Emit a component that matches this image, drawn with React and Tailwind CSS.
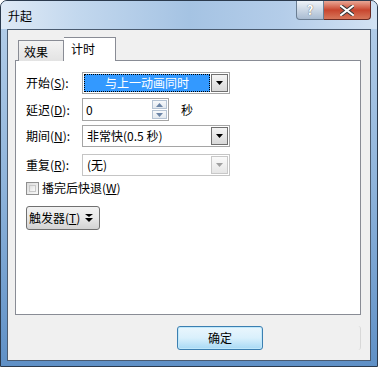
const font = { fontFamily: '"Microsoft YaHei", "Noto Sans CJK SC", sans-serif' };

function Arrow({ disabled }) {
  return (
    <svg width="7" height="4" viewBox="0 0 7 4">
      <path d="M0 0H7L3.5 4Z" fill={disabled ? "#a0a0a0" : "#000"} />
    </svg>
  );
}

function DropButton({ disabled }) {
  return (
    <div
      className={`w-[17px] h-full flex items-center justify-center border ${
        disabled
          ? "border-[#c8c8c8] bg-gradient-to-b from-[#fafafa] to-[#e6e6e6]"
          : "border-[#707070] bg-gradient-to-b from-[#f4f4f4] to-[#d9d9d9]"
      }`}
    >
      <Arrow disabled={disabled} />
    </div>
  );
}

function Label({ text, k }) {
  return (
    <div className="w-[56px] text-[12px] text-black">
      {text}(<span className="underline">{k}</span>):
    </div>
  );
}

export default function App() {
  return (
    <div
      className="w-[378px] h-[367px] rounded-t-[7px] border border-[#2b3a4d] bg-gradient-to-b from-[#b7d0ea] via-[#8fb4db] to-[#5f90c6] flex flex-col overflow-hidden"
      style={font}
    >
      {/* title bar */}
      <div className="h-[28px] flex items-start justify-between pl-[7px] pr-[6px] bg-[linear-gradient(90deg,#dfeaf6_0%,#c3d8ee_20%,#a5c3e3_50%,#b4cde9_75%,#d2e2f3_100%)]">
        <div className="text-[12px] text-black mt-[6px]">升起</div>
        <div className="flex">
          <div className="w-[28px] h-[19px] rounded-bl-[4px] border border-t-0 border-[#6a7d92] bg-gradient-to-b from-[#eef3f8] to-[#a9bcd2] flex items-center justify-center text-[13px] font-bold text-white [text-shadow:0_0_1px_#333]">
            ?
          </div>
          <div className="w-[47px] h-[19px] rounded-br-[4px] border border-t-0 border-l-0 border-[#6b2a22] bg-gradient-to-b from-[#e8a796] via-[#c8452e] to-[#d6765a] flex items-center justify-center">
            <svg width="14" height="11" viewBox="0 0 14 11">
              <path
                d="M1 1L13 10M13 1L1 10"
                stroke="#3a3a3a"
                strokeWidth="4"
                strokeLinecap="square"
              />
              <path
                d="M1 1L13 10M13 1L1 10"
                stroke="#fff"
                strokeWidth="2"
                strokeLinecap="square"
              />
            </svg>
          </div>
        </div>
      </div>

      {/* content */}
      <div className="mx-[6px] h-[332px] border border-[#4a5b70] bg-[#f0f0f0] flex flex-col">
        <div className="pl-[7px] pt-[7px]">
          {/* tabs */}
          <div className="flex items-end pl-[3px] h-[24px] relative z-10">
            <div className="w-[46px] h-[21px] border border-b-0 border-[#898c95] bg-gradient-to-b from-[#f3f3f3] to-[#e3e3e3] text-[12px] text-black pl-[5px] pt-[2px]">
              效果
            </div>
            <div className="w-[52px] h-[24px] border border-b-0 border-l-0 border-[#898c95] bg-white text-[12px] text-black pl-[7px] pt-[2px]">
              计时
            </div>
          </div>
          {/* panel */}
          <div className="w-[346px] h-[255px] -mt-px border border-[#898c95] bg-white pl-[10px] pt-[11px]">
            <div className="flex items-center">
              <Label text="开始" k="S" />
              <div className="w-[148px] h-[22px] border border-[#a5a5a5] p-[1px] flex">
                <div className="flex-1 mr-[1px] bg-[#3399ff] outline outline-1 outline-dotted outline-[#000] -outline-offset-1 text-white text-[12px] flex items-center justify-center">
                  与上一动画同时
                </div>
                <DropButton />
              </div>
            </div>

            <div className="flex items-center mt-[4px]">
              <Label text="延迟" k="D" />
              <div className="w-[87px] h-[23px] border border-[#a5a5a5] flex items-center justify-between pl-[3px] pr-[1px]">
                <span className="text-[12px] text-black">0</span>
                <div className="flex flex-col gap-[1px]">
                  <div className="w-[15px] h-[9px] border border-[#b5c3d3] bg-gradient-to-b from-[#f7f9fb] to-[#e3e9ef] flex items-center justify-center">
                    <svg width="7" height="4" viewBox="0 0 7 4">
                      <path d="M0 4H7L3.5 0Z" fill="#6b84a6" />
                    </svg>
                  </div>
                  <div className="w-[15px] h-[9px] border border-[#b5c3d3] bg-gradient-to-b from-[#f7f9fb] to-[#e3e9ef] flex items-center justify-center">
                    <svg width="7" height="4" viewBox="0 0 7 4">
                      <path d="M0 0H7L3.5 4Z" fill="#6b84a6" />
                    </svg>
                  </div>
                </div>
              </div>
              <span className="ml-[12px] text-[12px] text-black">秒</span>
            </div>

            <div className="flex items-center mt-[4px]">
              <Label text="期间" k="N" />
              <div className="w-[148px] h-[22px] border border-[#a5a5a5] p-[1px] flex">
                <div className="flex-1 text-black text-[12px] flex items-center pl-[3px]">
                  非常快(0.5 秒)
                </div>
                <DropButton />
              </div>
            </div>

            <div className="flex items-center mt-[7px]">
              <Label text="重复" k="R" />
              <div className="w-[148px] h-[22px] border border-[#c5c5c5] p-[1px] flex">
                <div className="flex-1 text-black text-[12px] flex items-center pl-[3px]">
                  (无)
                </div>
                <DropButton disabled />
              </div>
            </div>

            <div className="flex items-center mt-[2px] h-[20px]">
              <div className="w-[13px] h-[13px] border border-[#8f8f8f] bg-gradient-to-br from-[#dcdcdc] to-[#f8f8f8] p-[2px]">
                <div className="w-full h-full border border-[#c8c8c8] bg-gradient-to-br from-[#e0e0e0] to-[#fafafa]" />
              </div>
              <span className="ml-[3px] text-[12px] text-black">
                播完后快退(<span className="underline">W</span>)
              </span>
            </div>

            <div className="mt-[8px] w-[74px] h-[24px] rounded-[3px] border border-[#707070] bg-gradient-to-b from-[#f2f2f2] via-[#e8e8e8] to-[#d2d2d2] flex items-center pl-[2px] gap-[5px]">
              <span className="text-[12px] text-black">
                触发器(<span className="underline">T</span>)
              </span>
              <svg width="8" height="9" viewBox="0 0 8 9">
                <path d="M0 0H8L4 3Z" fill="#000" />
                <path d="M0 4H8L4 8Z" fill="#000" />
              </svg>
            </div>
          </div>
        </div>

        {/* bottom buttons */}
        <div className="flex items-center mt-[11px] pl-[169px]">
          <div className="w-[86px] h-[24px] rounded-[3px] border border-[#3c7fb1] bg-gradient-to-b from-[#eaf6fd] via-[#d9f0fc] to-[#a7d9f5] flex items-center justify-center text-[12px] text-black shadow-[inset_0_0_0_1px_#c0e8fb]">
            确定
          </div>
          <div className="ml-[94px] w-[4px] h-[24px] border-r border-[#d8d8d8] rounded-r-[3px]" />
        </div>
      </div>
    </div>
  );
}
